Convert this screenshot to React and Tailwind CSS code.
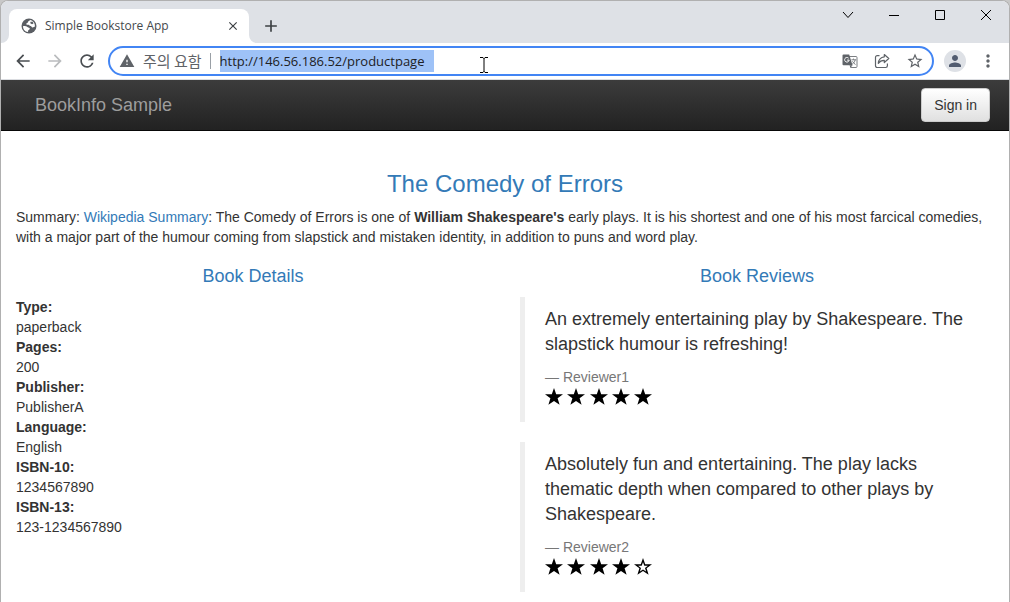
import React from "react";
import {
  MdAdd,
  MdArrowBack,
  MdArrowForward,
  MdClose,
  MdMoreVert,
  MdPerson,
  MdRefresh,
  MdStarBorder,
  MdWarning,
} from "react-icons/md";

const details = [
  ["Type:", "paperback"],
  ["Pages:", "200"],
  ["Publisher:", "PublisherA"],
  ["Language:", "English"],
  ["ISBN-10:", "1234567890"],
  ["ISBN-13:", "123-1234567890"],
];

const reviews = [
  {
    text: "An extremely entertaining play by Shakespeare. The slapstick humour is refreshing!",
    author: "Reviewer1",
    stars: 5,
  },
  {
    text: "Absolutely fun and entertaining. The play lacks thematic depth when compared to other plays by Shakespeare.",
    author: "Reviewer2",
    stars: 4,
  },
];

function GlobeIcon() {
  return (
    <svg viewBox="0 0 16 16" className="size-4" aria-hidden="true">
      <circle cx="8" cy="8" r="7.500" fill="#5a5e63" />
      <path d="M2 8.200c1.800-.3 3.600 0 4.800 1 .6.500 1.900.2 2 1.200.1 1.300-1.400 1-1.600 2.200l-.2 1.400C4.200 13.800 2 11.400 2 8.200z" fill="#fff" />
      <path d="M9 2.100c-.2 1-1.800.9-2 1.900-.2 1.200-1.600.8-1.700 1.900-.1 1 1.300.8 2.200.9 1 .1 1 1.300 2.100 1.300.9 0 1 1.300 2 1.400 1 .1 1.300-.7 2.300-.7C14.300 5.400 12 2.500 9 2.100z" fill="#fff" />
      <path d="M9.500 3.800h2.200l.8 1.600-1.500.8-1.700-.9z" fill="#5a5e63" />
    </svg>
  );
}

function TranslateIcon() {
  return (
    <svg viewBox="0 0 16 16" className="size-4" fill="none" aria-hidden="true">
      <path d="M7 3.500h7a1 1 0 0 1 1 1v9a1 1 0 0 1-1 1H8.500" stroke="#7b7e82" strokeWidth="1" />
      <path d="M1.500 1.500h5.700l3.300 10.700H1.500a1 1 0 0 1-1-1V2.500a1 1 0 0 1 1-1z" fill="#5f6368" />
      <path d="M7.500 12.200h3l-2 2.500z" fill="#5f6368" />
      <path d="M6.600 5.200a2.300 2.300 0 1 0 .6 1.900H5.100" stroke="#fff" strokeWidth="1" />
      <path d="M9.400 6.800h4.800M11.500 5.600v1.200M13.200 6.800c-.4 2-1.600 3.400-3 4.300M10.500 8.300c.7 1.300 1.700 2.400 3 3.200" stroke="#7b7e82" strokeWidth="1" />
    </svg>
  );
}

function ShareIcon() {
  return (
    <svg viewBox="0 0 16 16" className="size-4" fill="none" stroke="#5f6368" strokeWidth="1.200" strokeLinejoin="round" aria-hidden="true">
      <path d="M5.500 2.600H3.200a1.700 1.700 0 0 0-1.700 1.700v8.500a1.700 1.700 0 0 0 1.700 1.700h8.500a1.700 1.700 0 0 0 1.700-1.700V10.500" />
      <path d="M10.300 1.500l4.500 4-4.500 4V7.300C7.600 7.200 5.700 8.300 4.300 10.400 4.600 6.800 6.800 4.200 10.300 3.800z" />
    </svg>
  );
}

function Star({ filled }) {
  return (
    <svg viewBox="0 0 18 17" className="h-[17px] w-[18px]" aria-hidden="true">
      <path d="M9 0l2.200 6.300H18l-5.400 4 2 6.500L9 12.900l-5.600 3.900 2-6.500L0 6.300h6.800z" fill="#000" />
      {!filled && (
        <path d="M9 4.300l1.300 3.500h3.600l-2.900 2.200 1.100 3.500L9 11.400l-3.100 2.100L7 10 4.100 7.800h3.600z" fill="#fff" />
      )}
    </svg>
  );
}

function WindowControls() {
  const button = "flex w-[46px] items-center justify-center";
  const glyph = { viewBox: "0 0 12 12", className: "size-3", fill: "none", stroke: "#000", "aria-hidden": true };
  return (
    <div className="flex h-7">
      <button className={button} aria-label="Search tabs">
        <svg {...glyph}><path d="M1 3l5 5.500L11 3" /></svg>
      </button>
      <button className={button} aria-label="Minimize">
        <svg {...glyph}><path d="M1 6.500h10" /></svg>
      </button>
      <button className={button} aria-label="Maximize">
        <svg {...glyph}><path d="M1.500 1.500h9v9h-9z" /></svg>
      </button>
      <button className={button} aria-label="Close">
        <svg {...glyph}><path d="M1 1l10 10M11 1L1 11" /></svg>
      </button>
    </div>
  );
}

function TabStrip() {
  return (
    <div className="flex h-[42px] justify-between bg-[#dee1e6]">
      <div className="flex items-end pl-2">
        <div className="relative flex h-[34px] w-60 items-center rounded-t-lg bg-white pr-[9px] pl-3">
          <svg viewBox="0 0 8 8" className="absolute bottom-0 -left-2 size-2" aria-hidden="true"><path d="M8 0v8H0a8 8 0 0 0 8-8z" fill="#fff" /></svg>
          <svg viewBox="0 0 8 8" className="absolute -right-2 bottom-0 size-2" aria-hidden="true"><path d="M0 0v8h8a8 8 0 0 1-8-8z" fill="#fff" /></svg>
          <GlobeIcon />
          <span className="ml-2 flex-1 font-['Open_Sans','Noto_Sans_CJK_KR',sans-serif] text-[12px] text-[#45494d]">Simple Bookstore App</span>
          <button aria-label="Close tab"><MdClose className="size-[14px] text-[#3c4043]" /></button>
        </div>
        <button aria-label="New tab" className="ml-3 flex h-[34px] items-center">
          <MdAdd className="size-5 text-[#3c4043]" />
        </button>
      </div>
      <WindowControls />
    </div>
  );
}

function Toolbar() {
  return (
    <div className="flex h-[37px] items-center border-b border-[#dadce0] bg-white pr-[11px] pl-3">
      <div className="flex gap-3">
        <button aria-label="Back"><MdArrowBack className="size-5 text-[#4a4e52]" /></button>
        <button aria-label="Forward"><MdArrowForward className="size-5 text-[#babcbe]" /></button>
        <button aria-label="Reload"><MdRefresh className="size-5 text-[#4a4e52]" /></button>
      </div>
      <div className="relative ml-[11px] flex h-[30px] flex-1 items-center rounded-full border-2 border-[#4285f4] pr-2 pl-[9px]">
        <MdWarning className="size-4 text-[#5f6368]" />
        <span className="ml-2 font-['Noto_Sans_CJK_KR',sans-serif] text-[15px] leading-5 whitespace-nowrap text-[#5f6368]">주의 요함</span>
        <span className="ml-2 h-4 w-px bg-[#9aa0a6]" />
        <input
          aria-label="Address"
          defaultValue="http://146.56.186.52/productpage"
          className="ml-[9px] h-[22px] w-[214px] bg-[#9ec2f7] font-['Open_Sans',sans-serif] text-[13px] text-[#202124] outline-none"
        />
        <svg viewBox="0 0 8 16" className="absolute top-[9px] left-[370px] h-4 w-2" fill="none" stroke="#000" aria-hidden="true">
          <path d="M0 .5h3M5 .5h3M0 15.500h3M5 15.500h3M3 .5l1 1 1-1M3 15.500l1-1 1 1M4 1v14" />
        </svg>
        <div className="ml-auto flex items-center gap-4">
          <button aria-label="Translate this page"><TranslateIcon /></button>
          <button aria-label="Share this page"><ShareIcon /></button>
          <button aria-label="Bookmark this tab"><MdStarBorder className="size-[18px] text-[#5f6368]" /></button>
        </div>
      </div>
      <button aria-label="Profile" className="ml-[10px] flex size-[22px] items-center justify-center rounded-full bg-[#dee1e6]">
        <MdPerson className="size-[18px] text-[#525c70]" />
      </button>
      <button aria-label="Menu" className="ml-3"><MdMoreVert className="size-5 text-[#5f6368]" /></button>
    </div>
  );
}

export default function App() {
  return (
    <div className="min-h-screen bg-[#c8c8c8]">
      <div className="flex min-h-screen flex-col overflow-hidden rounded-t-lg border-x border-t border-[#b0b0b0] bg-white font-['Liberation_Sans',Arial,sans-serif] text-[14px] leading-5 text-[#333]">
        <TabStrip />
        <Toolbar />
        <nav className="flex h-[51px] items-center justify-between border-b border-[#080808] bg-linear-to-b from-[#3c3c3c] to-[#222] pr-[19px] pl-[34px]">
          <a href="#" className="text-[18px] text-[#9d9d9d]">BookInfo Sample</a>
          <button className="h-[34px] rounded border border-[#ccc] bg-linear-to-b from-white to-[#e0e0e0] px-3 text-[#333]">Sign in</button>
        </nav>
        <main className="px-[15px] pt-10">
          <h3 className="text-center text-[24px] leading-[26px] text-[#337ab7]">The Comedy of Errors</h3>
          <p className="mt-[10px]">
            Summary: <a href="#" className="text-[#337ab7]">Wikipedia Summary</a>: The Comedy of Errors is one of <b>William Shakespeare's</b> early plays. It is his shortest and one of his most farcical comedies, with a major part of the humour coming from slapstick and mistaken identity, in addition to puns and word play.
          </p>
          <div className="mt-[19px] grid grid-cols-2 gap-[30px]">
            <section>
              <h4 className="mb-[11px] text-center text-[18px] leading-5 text-[#337ab7]">Book Details</h4>
              <dl>
                {details.map(([term, value]) => (
                  <React.Fragment key={term}>
                    <dt className="font-bold">{term}</dt>
                    <dd>{value}</dd>
                  </React.Fragment>
                ))}
              </dl>
            </section>
            <section>
              <h4 className="mb-[11px] text-center text-[18px] leading-5 text-[#337ab7]">Book Reviews</h4>
              {reviews.map((review) => (
                <blockquote key={review.author} className="mb-5 border-l-[5px] border-[#eee] px-5 py-[10px] last:mb-[10px]">
                  <p className="mb-[10px] text-[18px] leading-[25px]">{review.text}</p>
                  <small className="block text-[14px] leading-5 text-[#777]">— {review.author}</small>
                  <div role="img" aria-label={`${review.stars} of 5 stars`} className="flex h-[25px] w-[107px] justify-between pt-px">
                    {[1, 2, 3, 4, 5].map((n) => (
                      <Star key={n} filled={n <= review.stars} />
                    ))}
                  </div>
                </blockquote>
              ))}
            </section>
          </div>
        </main>
      </div>
    </div>
  );
}
